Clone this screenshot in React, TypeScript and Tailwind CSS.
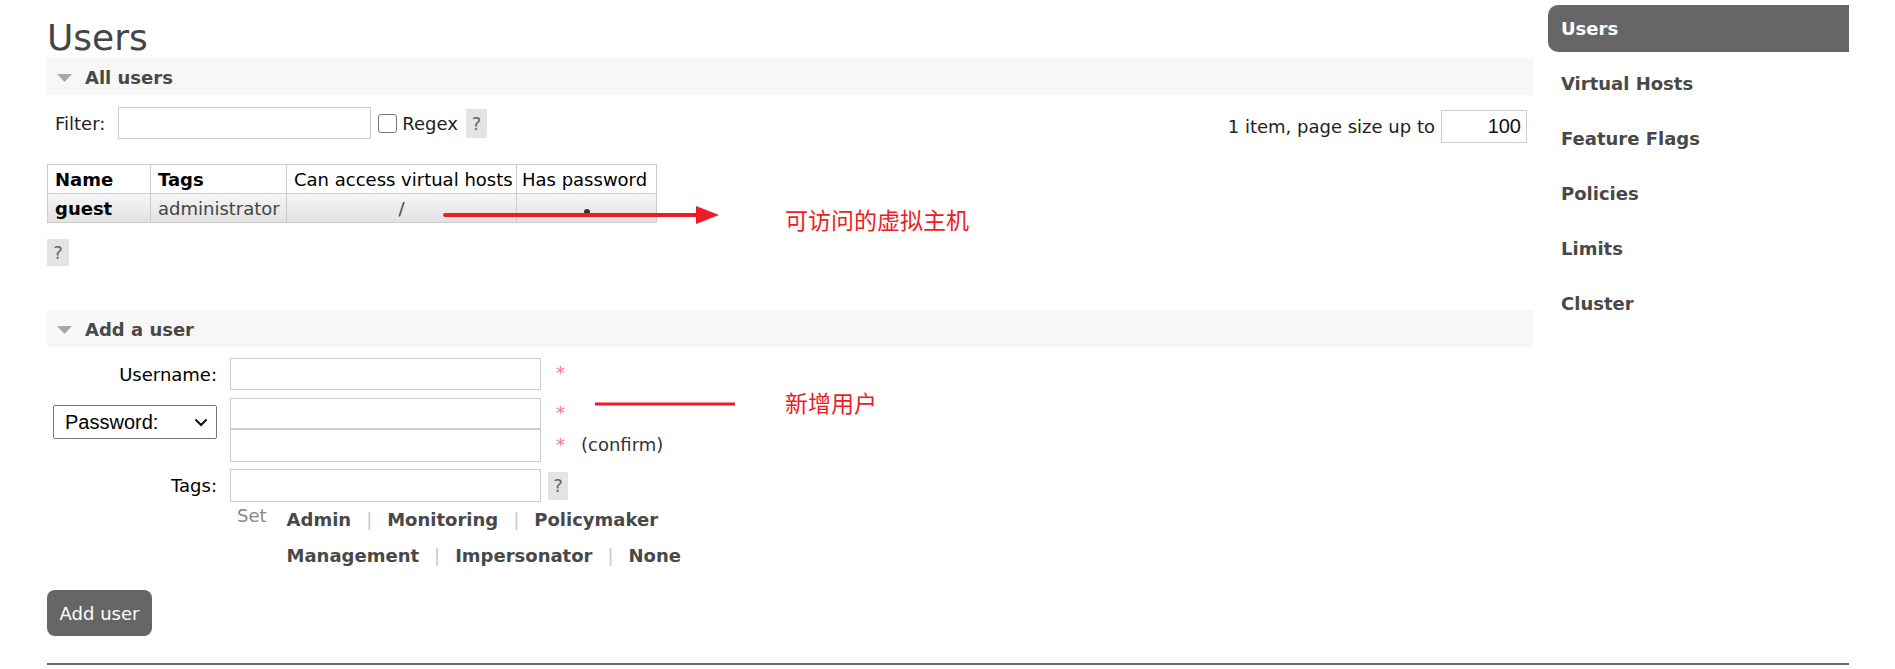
import React from "react";

const navItems = ["Users", "Virtual Hosts", "Feature Flags", "Policies", "Limits", "Cluster"];

function Help({ className }: { className: string }) {
  return (
    <span className={`flex items-center justify-center bg-[#e4e4e4] text-[18px] text-[#666] ${className}`}>
      ?
    </span>
  );
}

function Band({ title, className }: { title: string; className: string }) {
  return (
    <div className={`flex h-[37px] items-center bg-[#f7f7f7] pl-[10px] ${className}`}>
      <svg width="15" height="8" viewBox="0 0 15 8" className="mr-[13px] mt-[3px]">
        <path d="M0 0h15L7.5 8z" fill="#a8a8a8" />
      </svg>
      <h2 className="pt-[2px] text-[18px] leading-none font-bold text-[#484848]">{title}</h2>
    </div>
  );
}

function Star({ className }: { className: string }) {
  return <span className={`text-[18px] leading-[30px] text-[#f77] ${className}`}>*</span>;
}

function Sep() {
  return <span className="px-[15px] font-normal text-[#c8c8c8]">|</span>;
}

export default function App() {
  return (
    <div className="relative flex h-[669px] w-[1895px] flex-col overflow-hidden bg-white font-['DejaVu_Sans',sans-serif] text-[18px] text-[#222]">
      <div className="flex">
        {/* main */}
        <div className="ml-[47px] w-[1486px]">
          <h1 className="pt-[17px] text-[36px] leading-[41px] font-normal text-[#444]">Users</h1>
          <Band title="All users" className="" />

          <div className="mt-[12px] flex items-start justify-between">
            <div className="flex h-[32px] items-center">
              <span className="ml-[8px] mr-[13px]">Filter:</span>
              <div className="h-[32px] w-[253px] border border-[#ccc]" />
              <span className="ml-[7px] h-[19px] w-[19px] rounded-[3px] border border-[#767676] bg-white" />
              <span className="ml-[5px]">Regex</span>
              <Help className="ml-[8px] h-[29px] w-[21px]" />
            </div>
            <div className="mr-[6px] mt-[3px] flex items-center">
              <span>1 item, page size up to</span>
              <div className="ml-[6px] h-[33px] w-[86px] border border-[#ccc] pr-[5px] text-right font-['Liberation_Sans',sans-serif] text-[20px] leading-[31px] text-[#111]">
                100
              </div>
            </div>
          </div>

          <table className="mt-[21px] w-[609px] table-fixed border-collapse text-[18px]">
            <colgroup>
              <col className="w-[103px]" />
              <col className="w-[136px]" />
              <col className="w-[230px]" />
              <col className="w-[140px]" />
            </colgroup>
            <thead>
              <tr className="h-[29px] text-black">
                <th className="border border-[#ccc] px-[7px] text-left font-bold">Name</th>
                <th className="border border-[#ccc] px-[7px] text-left font-bold">Tags</th>
                <th className="border border-[#ccc] px-[7px] text-left font-normal whitespace-nowrap">Can access virtual hosts</th>
                <th className="border border-[#ccc] px-[5px] text-left font-normal whitespace-nowrap">Has password</th>
              </tr>
            </thead>
            <tbody>
              <tr className="h-[29px] bg-gradient-to-b from-[#f5f5f5] to-[#e2e2e2]">
                <td className="border border-[#ccc] px-[7px] font-bold text-black">guest</td>
                <td className="border border-[#ccc] px-[7px] text-[#444]">administrator</td>
                <td className="border border-[#ccc] px-[7px] text-center text-[#444]">/</td>
                <td className="border border-[#ccc] text-center">
                  <span className="inline-block h-[6px] w-[6px] rounded-full bg-[#333]" />
                </td>
              </tr>
            </tbody>
          </table>

          <Help className="mt-[16px] h-[27px] w-[22px]" />

          <Band title="Add a user" className="mt-[44px]" />

          <div className="mt-[11px] flex items-start">
            <div className="flex h-[32px] w-[170px] items-center justify-end text-black">Username:</div>
            <div className="ml-[13px] h-[32px] w-[311px] border border-[#ccc]" />
            <Star className="ml-[15px]" />
          </div>

          <div className="mt-[8px] flex items-start">
            <div className="flex w-[170px] justify-end">
              <div className="mt-[7px] flex h-[34px] w-[164px] items-center justify-between rounded-[2px] border border-[#767676] pl-[11px] pr-[8px] font-['Liberation_Sans',sans-serif] text-[20px] text-black">
                <span>Password:</span>
                <svg width="14" height="9" viewBox="0 0 14 9">
                  <path d="M1.5 1.5L7 7l5.5-5.5" fill="none" stroke="#111" strokeWidth="2" />
                </svg>
              </div>
            </div>
            <div className="ml-[13px] flex flex-col">
              <div className="flex items-start">
                <div className="h-[32px] w-[311px] border border-b-2 border-[#ccc]" />
                <Star className="ml-[15px]" />
              </div>
              <div className="flex items-start">
                <div className="h-[32px] w-[311px] border border-t-0 border-[#ccc]" />
                <Star className="ml-[15px]" />
                <span className="ml-[16px] leading-[30px] text-[#333]">(confirm)</span>
              </div>
            </div>
          </div>

          <div className="mt-[7px] flex items-center">
            <div className="w-[170px] text-right text-black">Tags:</div>
            <div className="ml-[13px] h-[33px] w-[311px] border border-[#ccc]" />
            <Help className="ml-[7px] h-[28px] w-[20px]" />
          </div>

          <div className="ml-[190px] flex items-start">
            <span className="leading-[28px] text-[#888]">Set</span>
            <div className="ml-[20px] leading-[36px] font-bold text-[#484848]">
              <div className="flex">
                <span>Admin</span>
                <Sep />
                <span>Monitoring</span>
                <Sep />
                <span>Policymaker</span>
              </div>
              <div className="flex">
                <span>Management</span>
                <Sep />
                <span>Impersonator</span>
                <Sep />
                <span>None</span>
              </div>
            </div>
          </div>

          <button className="mt-[16px] h-[46px] w-[105px] rounded-[8px] bg-[#666] text-[18px] text-white">
            Add user
          </button>
        </div>

        {/* sidebar */}
        <nav className="ml-[15px] flex w-[301px] flex-col gap-[8px] pt-[5px]">
          {navItems.map((item, i) => (
            <div
              key={item}
              className={
                i === 0
                  ? "flex h-[47px] items-center rounded-l-[10px] bg-[#666] pl-[13px] font-bold text-white"
                  : "flex h-[47px] items-center pl-[13px] font-bold text-[#484848]"
              }
            >
              {item}
            </div>
          ))}
        </nav>
      </div>

      <div className="ml-[47px] mt-[27px] h-[2px] w-[1802px] bg-[#6a6a6a]" />

      {/* red annotations */}
      <svg className="pointer-events-none absolute left-0 top-0" width="1895" height="669">
        <line x1="445" y1="215" x2="700" y2="215" stroke="#ed1c24" strokeWidth="4" strokeLinecap="round" />
        <polygon points="696,206 719,215 696,224" fill="#ed1c24" />
        <line x1="595" y1="404" x2="735" y2="404" stroke="#ed1c24" strokeWidth="3" />
      </svg>
      <span className="absolute left-[785px] top-[206px] font-['Noto_Sans_CJK_SC',sans-serif] text-[23px] leading-[26px] text-[#ed1c24]">
        可访问的虚拟主机
      </span>
      <span className="absolute left-[785px] top-[389px] font-['Noto_Sans_CJK_SC',sans-serif] text-[23px] leading-[26px] text-[#ed1c24]">
        新增用户
      </span>
    </div>
  );
}
